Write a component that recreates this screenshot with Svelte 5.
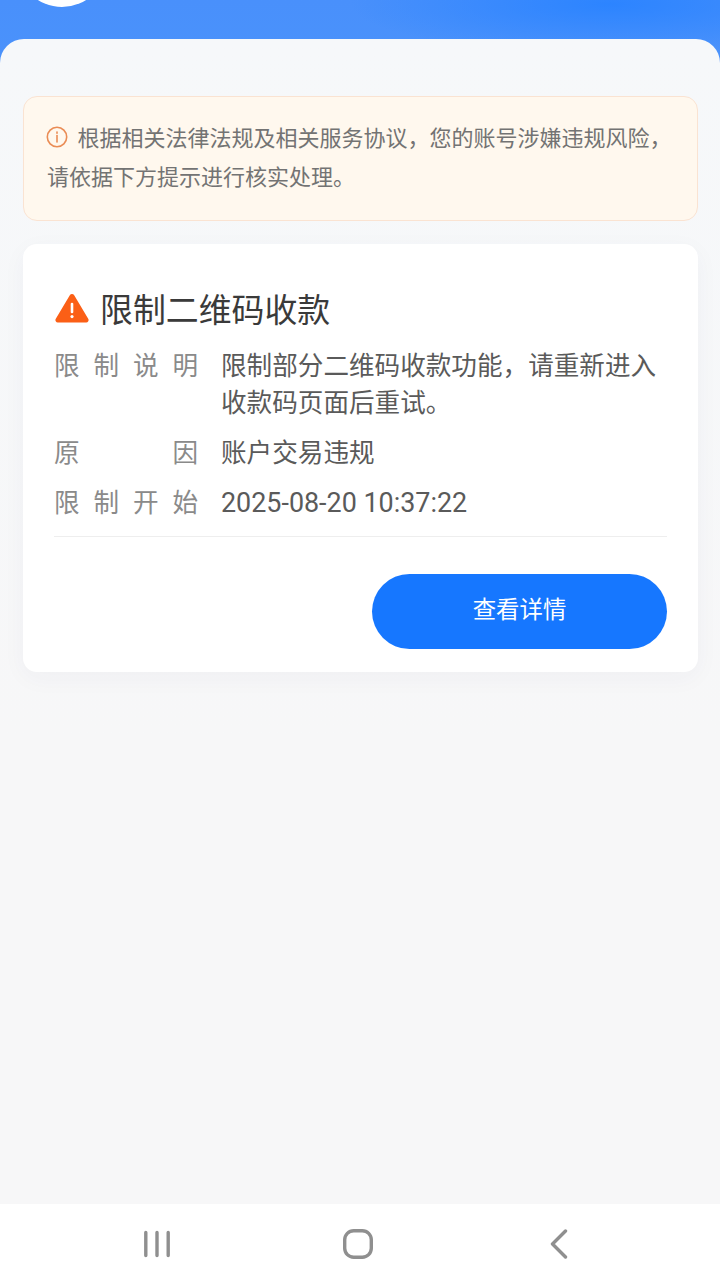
<script lang="ts">
	const rows = [
		{ label: '限制说明', value: '限制部分二维码收款功能，请重新进入收款码页面后重试。' },
		{ label: '原因', value: '账户交易违规' },
		{ label: '限制开始', value: '2025-08-20 10:37:22', latin: true }
	];
</script>

<div class="page">
	<header class="top">
		<div class="avatar"></div>
	</header>

	<main class="sheet">
		<div class="notice">
			<svg class="info" viewBox="0 0 22 22" width="22" height="22" fill="none" stroke="#ea8c55">
				<circle cx="11" cy="11" r="9.7" stroke-width="1.6" />
				<path d="M11 9.5v6.5" stroke-width="1.6" stroke-linecap="round" />
				<path d="M11 6v1.2" stroke-width="1.6" stroke-linecap="round" />
			</svg>
			根据相关法律法规及相关服务协议，您的账号涉嫌违规风险，请依据下方提示进行核实处理。
		</div>

		<section class="card">
			<h2 class="title">
				<svg viewBox="0 0 34 30" width="34" height="30">
					<path
						d="M14.8 2.2a2.6 2.6 0 0 1 4.4 0l14 23.6a2.4 2.4 0 0 1-2.2 3.7H3a2.4 2.4 0 0 1-2.2-3.7z"
						fill="#fb5f16"
					/>
					<path d="M17 11v8" stroke="#fff" stroke-width="2.6" stroke-linecap="round" />
					<circle cx="17" cy="23.6" r="1.6" fill="#fff" />
				</svg>
				限制二维码收款
			</h2>

			<dl class="rows">
				{#each rows as row}
					<div class="row">
						<dt>{row.label}</dt>
						<dd class:latin={row.latin}>{row.value}</dd>
					</div>
				{/each}
			</dl>

			<div class="actions">
				<button type="button" class="detail">查看详情</button>
			</div>
		</section>
	</main>

	<nav class="navbar">
		<svg viewBox="0 0 26 28" width="26" height="28" stroke="#8f8f8f" stroke-width="3.4" stroke-linecap="round">
			<path d="M1.800 2.500v23M13 2.500v23M24.200 2.500v23" />
		</svg>
		<svg viewBox="0 0 30 30" width="30" height="30" fill="none" stroke="#8f8f8f" stroke-width="3.4">
			<rect x="1.700" y="1.700" width="26.600" height="26.600" rx="9" />
		</svg>
		<svg viewBox="0 0 18 30" width="18" height="30" fill="none" stroke="#8f8f8f" stroke-width="3.4" stroke-linecap="round" stroke-linejoin="round">
			<path d="M15.500 2 2.500 15l13 13" />
		</svg>
	</nav>
</div>

<style>
	:global(body) {
		margin: 0;
		background: #f7f7f8;
	}

	.page {
		width: 720px;
		height: 1288px;
		display: flex;
		flex-direction: column;
		overflow: hidden;
		font-family: Roboto, 'Noto Sans CJK SC', sans-serif;
		background:
			radial-gradient(ellipse 260px 50px at 610px 4px, #2c84ff 0%, rgba(44, 132, 255, 0) 100%),
			linear-gradient(#4990fb, #4a92fb 60px);
	}

	.top {
		height: 64px;
		margin-bottom: -25px;
		flex: none;
		overflow: hidden;
		position: relative;
	}

	.avatar {
		position: absolute;
		left: 17px;
		top: -83px;
		width: 90px;
		height: 90px;
		border-radius: 50%;
		background: #fff;
	}

	.sheet {
		flex: 1;
		position: relative;
		border-radius: 24px 24px 0 0;
		background: linear-gradient(#f6f8fa, #f7f7f8 700px);
		padding: 57px 22px 0 23px;
		box-sizing: border-box;
	}

	.notice {
		box-sizing: border-box;
		height: 125px;
		padding: 22px 23px 0;
		border: 1px solid #fae3d2;
		border-radius: 14px;
		background: #fff8ee;
		color: #737373;
		font-size: 22px;
		line-height: 39px;
	}

	.info {
		vertical-align: -2px;
		margin-right: 4px;
		margin-left: -1px;
	}

	.card {
		box-sizing: border-box;
		height: 428px;
		margin-top: 23px;
		padding: 43px 31px 0;
		border-radius: 14px;
		background: #fff;
		box-shadow: 0 6px 24px rgba(40, 60, 100, 0.04);
	}

	.title {
		display: flex;
		align-items: center;
		gap: 11px;
		margin: 0;
		height: 41px;
		font-size: 32.9px;
		font-weight: 400;
		color: #3a3a3a;
	}

	.title svg {
		margin-left: 1px;
	}

	.rows {
		margin: 20px 0 0;
		padding-bottom: 14px;
		border-bottom: 1px solid #eeeeee;
	}

	.row {
		display: flex;
		gap: 23px;
		margin-bottom: 13px;
		font-size: 25.600px;
		line-height: 37px;
	}

	.row:last-child {
		margin-bottom: 0;
	}

	dt {
		flex: none;
		width: 144px;
		text-align: justify;
		text-align-last: justify;
		color: #8a8a8a;
	}

	dd {
		margin: 0;
		color: #5a5a5a;
	}

	dd.latin {
		font-size: 26.9px;
	}

	.actions {
		display: flex;
		justify-content: flex-end;
		margin-top: 37px;
	}

	.detail {
		width: 295px;
		height: 75px;
		border: 0;
		border-radius: 38px;
		background: #1677ff;
		color: #fff;
		font-family: inherit;
		font-size: 23.400px;
		padding: 0 0 8px;
	}

	.navbar {
		flex: none;
		height: 84px;
		box-sizing: border-box;
		background: #fff;
		display: grid;
		grid-template-columns: repeat(3, 201px);
		justify-content: center;
		justify-items: center;
		align-items: center;
		padding-right: 5px;
	}

	.navbar svg {
		margin-top: -4px;
	}
</style>
